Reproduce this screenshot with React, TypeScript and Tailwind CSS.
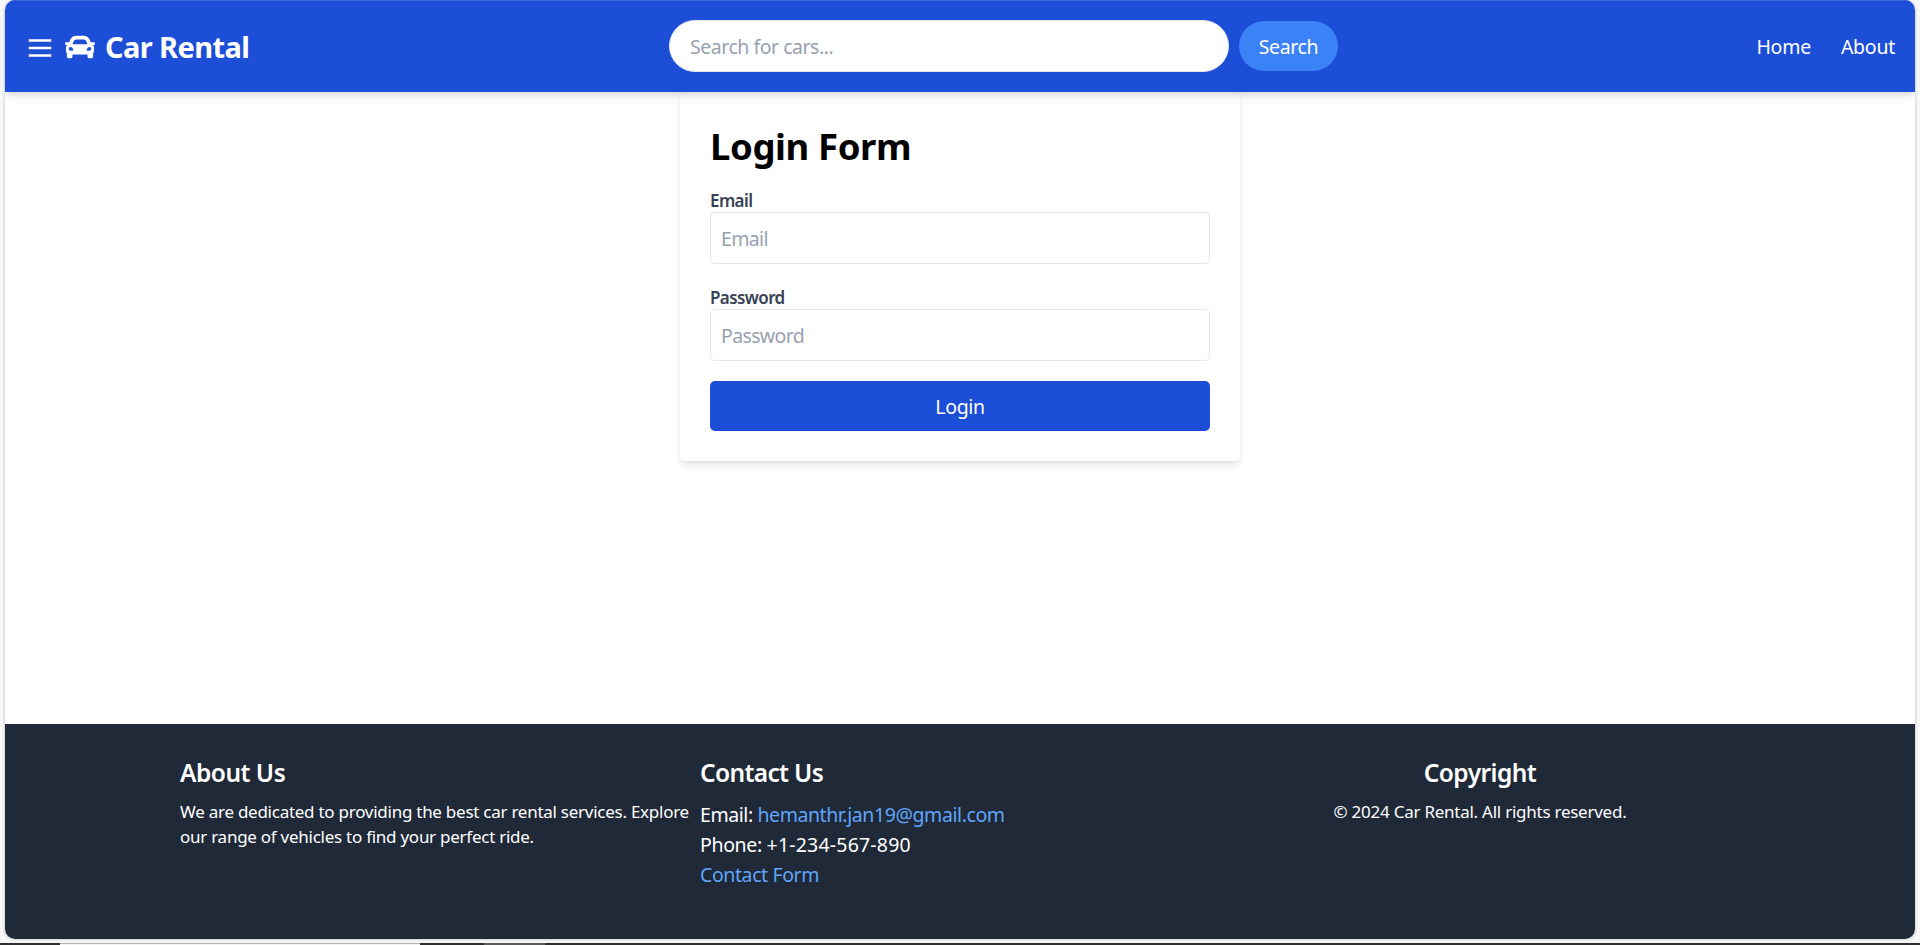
import React from "react";
import { FaCar } from "react-icons/fa";

function Header() {
  return (
    <header className="relative z-10 flex h-[92px] shrink-0 items-center justify-between border-t border-[#3b66dc] bg-[#1d4ed8] px-5 text-white shadow-[0_5px_8px_-1px_rgba(0,0,0,0.12),0_2px_5px_-2px_rgba(0,0,0,0.1)]">
      <div className="flex w-[644px] items-center">
        <svg className="mr-2.5 mt-[3px] size-[30px]" viewBox="0 0 24 24" fill="none" stroke="currentColor" strokeWidth="2">
          <path d="M3 6h18M3 12h18M3 18h18" />
        </svg>
        <FaCar className="mr-2.5 size-[30px]" />
        <span className="text-[29px] font-bold leading-[40px] tracking-[-0.6px]">Car Rental</span>
      </div>
      <div className="mb-[2px] flex flex-1 items-center gap-2.5">
        <input
          className="h-[52px] w-[560px] rounded-full border border-gray-200 bg-white px-5 pt-0.5 text-[19.5px] tracking-[-0.48px] placeholder:text-gray-400"
          placeholder="Search for cars..."
        />
        <button className="h-[50px] w-[99px] rounded-full bg-[#3b82f6] pt-0.5 text-[19.5px] tracking-[-0.35px]">Search</button>
      </div>
      <nav className="flex gap-[30px] text-[19.5px] tracking-[-0.25px]">
        <a>Home</a>
        <a>About</a>
      </nav>
    </header>
  );
}

function Field({ label, type }: { label: string; type: string }) {
  return (
    <div>
      <label className="block pt-0.5 text-[17px] font-semibold leading-[23px] tracking-[-0.6px] text-gray-700">{label}</label>
      <input
        type={type}
        placeholder={label}
        className="block h-[52px] w-full rounded-[5px] border border-[#e5e7eb] px-2.5 text-[19.5px] tracking-[-0.65px] placeholder:text-gray-400"
      />
    </div>
  );
}

function LoginCard() {
  return (
    <form className="mx-auto flex h-[369px] w-[560px] flex-col rounded-[5px] bg-white px-[30px] pt-[29px] shadow-[0_5px_8px_-1px_rgba(0,0,0,0.1),0_2px_5px_-2px_rgba(0,0,0,0.1)]">
      <h1 className="text-[36.5px] font-bold leading-[50px] tracking-[-0.4px] text-black">Login Form</h1>
      <div className="mt-4 flex flex-col gap-5">
        <Field label="Email" type="email" />
        <Field label="Password" type="password" />
        <button type="button" className="h-[50px] rounded-[5px] bg-[#1d4ed8] pt-px text-[19.5px] tracking-[-0.35px] text-white">
          Login
        </button>
      </div>
    </form>
  );
}

function Footer() {
  return (
    <footer className="flex h-[215px] shrink-0 bg-[#1f2937] pl-[175px] pt-[30px] text-white">
      <section className="w-[520px]">
        <h2 className="text-[24.5px] font-semibold leading-[37px] tracking-[-0.5px]">About Us</h2>
        <p className="mt-2 whitespace-nowrap text-[17px] leading-[25px] tracking-[-0.26px]">
          We are dedicated to providing the best car rental services. Explore
          <br />
          our range of vehicles to find your perfect ride.
        </p>
      </section>
      <section className="w-[520px]">
        <h2 className="text-[24.5px] font-semibold leading-[37px] tracking-[-0.65px]">Contact Us</h2>
        <div className="mt-[9px] text-[19.5px] leading-[30px]">
          <p className="tracking-[-0.42px]">
            Email: <a className="text-[#60a5fa]">hemanthr.jan19@gmail.com</a>
          </p>
          <p>
            <span className="tracking-[-0.35px]">Phone: </span>
            <span className="tracking-[0.2px]">+1-234-567-890</span>
          </p>
          <a className="tracking-[-0.4px] text-[#60a5fa]">Contact Form</a>
        </div>
      </section>
      <section className="w-[520px] text-center">
        <h2 className="text-[24.5px] font-semibold leading-[37px] tracking-[-0.55px]">Copyright</h2>
        <p className="mt-2 text-[17px] leading-[25px] tracking-[-0.25px]">© 2024 Car Rental. All rights reserved.</p>
      </section>
    </footer>
  );
}

export default function App() {
  return (
    <div className="flex h-[945px] flex-col overflow-hidden bg-[#f7f7f7] font-['Noto_Sans',sans-serif]">
      <div className="mx-[5px] flex h-[939px] shrink-0 flex-col overflow-hidden rounded-[10px] bg-white shadow-[0_0_3px_rgba(0,0,0,0.3)]">
        <Header />
        <main className="flex-1">
          <LoginCard />
        </main>
        <Footer />
      </div>
      <div className="mt-1 flex h-0.5 shrink-0 bg-[#302e2e]">
        <div className="ml-[60px] h-full w-[360px] border-t border-[#b5b5b5] bg-[#f3f3f3]" />
        <div className="ml-16 h-full w-[61px] bg-[#5c5a5a]" />
      </div>
    </div>
  );
}
